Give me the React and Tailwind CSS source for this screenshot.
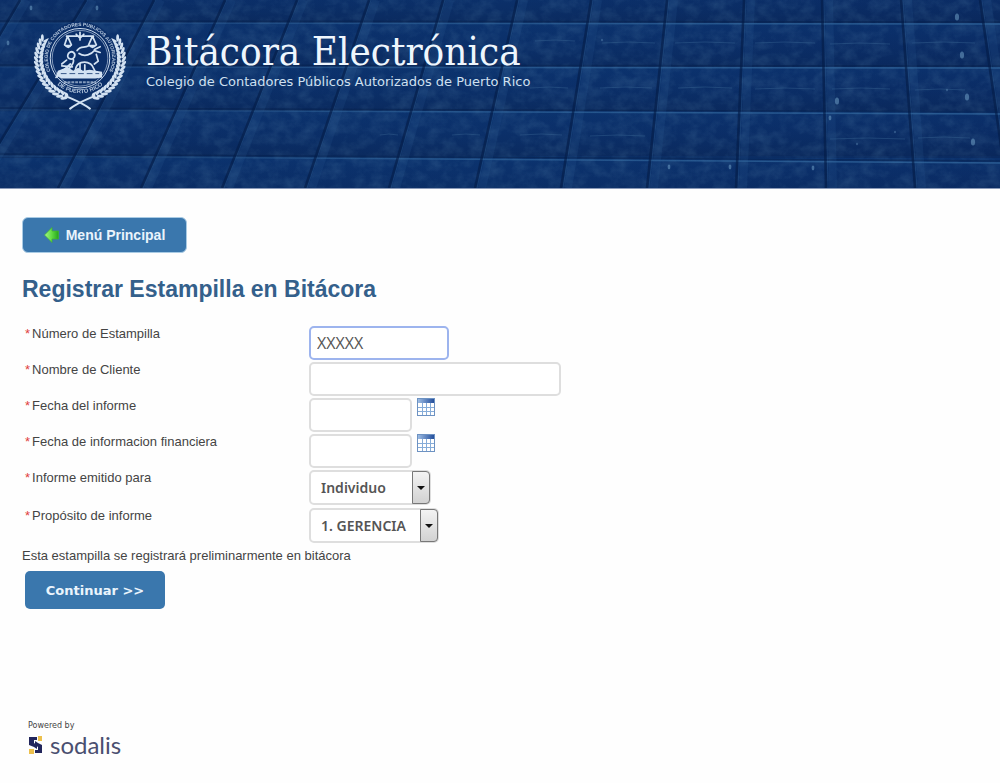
import { useState } from "react";

// [x at top, x at bottom] of each joint between tiles
const JOINTS = [
  [20, -90], [86, -28], [154, 58], [225, 141], [297, 222], [369, 305],
  [443, 389], [517, 475], [591, 561], [667, 647], [744, 736], [822, 826],
  [901, 915], [980, 1007],
];

// y of each row on the left and right side
const ROWS = [[22, 23], [66, 67], [109, 113], [155, 162]];

const GLINTS = [
  [957, 17, 3], [962, 55, 3], [967, 97, 3], [973, 142, 3], [837, 101, 3],
  [813, 168, 2], [730, 167, 2], [669, 167, 2], [830, 118, 2], [857, 144, 1],
  [8, 43, 2], [31, 8, 2], [97, 8, 2], [895, 132, 1], [947, 90, 1], [602, 40, 1],
];

const STREAKS = [
  [535, 41, 575], [602, 43, 655], [675, 43, 735], [755, 43, 815], [830, 44, 890], [912, 43, 975],
  [530, 88, 568], [600, 88, 652], [678, 88, 732], [755, 89, 815], [832, 89, 890], [915, 90, 965],
  [520, 135, 562], [590, 136, 645], [830, 139, 905], [918, 138, 970], [452, 135, 480], [380, 135, 398],
];

function TileBackdrop() {
  return (
    <svg
      className="absolute inset-0 w-full h-full"
      viewBox="0 0 1000 188"
      preserveAspectRatio="none"
      aria-hidden="true"
    >
      <defs>
        <linearGradient id="base" x1="0" y1="0" x2="1" y2="0">
          <stop offset="0" stopColor="#0a2c62" />
          <stop offset="0.5" stopColor="#0b2f66" />
          <stop offset="1" stopColor="#0a2a60" />
        </linearGradient>
        <linearGradient id="tile" x1="0" y1="0" x2="0" y2="1">
          <stop offset="0" stopColor="#0c3878" stopOpacity="0.5" />
          <stop offset="0.45" stopColor="#0c3272" stopOpacity="0.3" />
          <stop offset="1" stopColor="#0a2454" stopOpacity="0.4" />
        </linearGradient>
        <linearGradient id="edge" gradientUnits="userSpaceOnUse" x1="0" y1="0" x2="1000" y2="0">
          <stop offset="0" stopColor="#3a73a8" stopOpacity="0.15" />
          <stop offset="0.45" stopColor="#3a73a8" stopOpacity="0.5" />
          <stop offset="1" stopColor="#3a73a8" stopOpacity="0.6" />
        </linearGradient>
        <filter id="grain" x="0" y="0" width="100%" height="100%">
          <feTurbulence type="fractalNoise" baseFrequency="0.07 0.09" numOctaves="4" seed="8" />
          <feColorMatrix values="0 0 0 0 0.22  0 0 0 0 0.45  0 0 0 0 0.62  0 1.6 0 0 -0.6" />
        </filter>
      </defs>
      <rect width="1000" height="188" fill="url(#base)" />
      {[-21, 23, 67, 111, 158].map((y) => (
        <rect key={y} y={y} width="1000" height="45" fill="url(#tile)" />
      ))}
      <rect width="1000" height="188" filter="url(#grain)" opacity="0.18" />
      {STREAKS.map(([x, y, end]) => (
        <path
          key={`${x}-${y}`}
          d={`M${x} ${y}Q${(x + end) / 2} ${y - 2} ${end} ${y}`}
          fill="none"
          stroke="#3c6896"
          strokeOpacity="0.4"
        />
      ))}
      {ROWS.map(([l, r]) => (
        <g key={l}>
          <path d={`M0 ${l - 1}L1000 ${r - 1}`} stroke="#06204c" strokeWidth="1.5" strokeOpacity="0.5" />
          <path d={`M0 ${l + 1}L1000 ${r + 1}`} stroke="url(#edge)" strokeWidth="1.5" />
        </g>
      ))}
      {JOINTS.map(([a, b]) => (
        <g key={a}>
          <path d={`M${a + 7} 0L${b + 7} 188`} stroke="#2f639b" strokeWidth="8" strokeOpacity="0.16" />
          <path d={`M${a + 2} 0L${b + 2} 188`} stroke="#336494" strokeWidth="1" strokeOpacity="0.3" />
          <path d={`M${a} 0L${b} 188`} stroke="#051d48" strokeWidth="2.5" strokeOpacity="0.65" />
        </g>
      ))}
      {GLINTS.map(([x, y, r]) => (
        <ellipse key={`${x}-${y}`} cx={x} cy={y} rx={r * 0.7} ry={r * 1.2} fill="#6f9fc4" opacity="0.55" />
      ))}
    </svg>
  );
}

function Laurel() {
  const leaves = [];
  for (let i = 0; i < 17; i++) {
    const deg = 112 + i * 6.2;
    const a = (deg * Math.PI) / 180;
    const x = 50 + 43 * Math.cos(a);
    const y = 45 + 41 * Math.sin(a);
    leaves.push(
      <g key={i} transform={`translate(${x} ${y}) rotate(${deg + 90})`}>
        <ellipse cx="1" cy="-2.4" rx="3.8" ry="1.5" transform="rotate(-32)" />
        <ellipse cx="1" cy="2.4" rx="3.8" ry="1.5" transform="rotate(32)" />
      </g>
    );
  }
  return (
    <g>
      {leaves}
      <path d="M34 83C43 87 52 90 61 97" fill="none" stroke="currentColor" strokeWidth="2" />
    </g>
  );
}

function Seal() {
  return (
    <svg className="w-24 h-24 shrink-0 text-[#d3e2f2]" viewBox="0 0 100 100" fill="currentColor" role="img" aria-label="Sello del Colegio">
      <defs>
        <path id="ringTop" d="M23.6 64.6A33.5 33.5 0 1 1 76.4 64.6" />
        <path id="ringBottom" d="M23 68.5A36.5 36.5 0 0 0 77 68.5" />
      </defs>
      <Laurel />
      <g transform="translate(100 0) scale(-1 1)">
        <Laurel />
      </g>
      <circle cx="50" cy="44" r="38.5" fill="#0b2f69" />
      <text fontSize="5" fontFamily="Liberation Sans, sans-serif" fontWeight="bold" opacity="0.85">
        <textPath href="#ringTop" startOffset="50%" textAnchor="middle">COLEGIO DE CONTADORES PUBLICOS AUTORIZADOS</textPath>
      </text>
      <text fontSize="6" fontFamily="Liberation Sans, sans-serif" fontWeight="bold" opacity="0.85">
        <textPath href="#ringBottom" startOffset="50%" textAnchor="middle">DE PUERTO RICO</textPath>
      </text>
      <circle cx="50" cy="44" r="31" fill="none" stroke="currentColor" strokeWidth="1" />
      <circle cx="50" cy="44" r="29" fill="none" stroke="currentColor" strokeWidth="0.6" />
      <g fill="none" stroke="currentColor" strokeWidth="1.8" strokeLinecap="round" strokeLinejoin="round">
        <path d="M36 21H64M50 17V25M46 19L50 23L54 19M37 21L34 30M37 21L41 30M63 21L59 30M63 21L67 30" />
        <path d="M47 36C51 30 54 34 59 31M49 39C55 43 62 40 65 36L71 38M65 35L71 32M67 40L69 47L65 50" />
        <path d="M38 39C42 35 46 39 44 43C41 47 35 44 38 39M43 45C45 50 38 54 37 58M36 46L31 50" />
        <path d="M45 57C46 48 55 46 61 50C65 53 64 57 67 59M50 49V57M55 51V58" />
        <path d="M25 64L40 50M31 52L42 53" />
      </g>
      <path d="M33 30H42Q38 37 33 30ZM58 30H68Q63 37 58 30Z" />
      <path d="M27 57L37 53L43 57L48 54L53 57L60 56L73 58V64L66 65H31L25 62Z" />
      <path d="M30 60H70" stroke="#0b2f69" strokeWidth="0.8" strokeDasharray="6 3" />
      <path d="M33 69H67" stroke="currentColor" strokeWidth="2" strokeDasharray="3 1" opacity="0.6" />
    </svg>
  );
}

function ArrowIcon() {
  return (
    <svg className="w-4 h-4" viewBox="0 0 16 16" aria-hidden="true">
      <defs>
        <linearGradient id="arrow" x1="0" x2="1">
          <stop offset="0" stopColor="#a5f78a" />
          <stop offset="0.5" stopColor="#62dd43" />
          <stop offset="1" stopColor="#25a51b" />
        </linearGradient>
      </defs>
      <path d="M0.5 8L8 0.5V4H14.5V12H8V15.5Z" fill="url(#arrow)" stroke="#43b52c" strokeWidth="0.7" />
    </svg>
  );
}

function CalendarIcon() {
  return (
    <svg className="w-[18px] h-[18px]" viewBox="0 0 18 18" aria-hidden="true">
      <defs>
        <linearGradient id="calHead" x1="0" x2="1">
          <stop offset="0" stopColor="#9dbce3" />
          <stop offset="1" stopColor="#244f9c" />
        </linearGradient>
      </defs>
      <rect x="0.5" y="0.5" width="17" height="17" fill="#fff" stroke="#6d92c2" />
      <rect x="1" y="1" width="16" height="4" fill="url(#calHead)" />
      <path d="M1 9.5H17M1 13.5H17M5.5 5V17M9.5 5V17M13.5 5V17" stroke="#86acd8" />
    </svg>
  );
}

function SodalisLogo() {
  return (
    <div className="flex items-center gap-1.5">
      <svg className="w-4 h-5" viewBox="0 0 16 20" aria-hidden="true">
        <path d="M1 2H9V5H6V8L9 10V14L6 12L1 10Z" fill="#22265c" />
        <path d="M7 6L10 8L14 10V18H7V15H10V12L7 10Z" fill="#22265c" />
        <path d="M10 1H14V6H10ZM1 14H6V19H1Z" fill="#ecc04d" />
      </svg>
      <span className="font-[Lato,sans-serif] text-2xl leading-7 text-[#4a4f70]">sodalis</span>
    </div>
  );
}

function Field({ id, label, tall, children }) {
  return (
    <div className={`flex items-start ${tall ? "h-[38px]" : "h-9"}`}>
      <label htmlFor={id} className="w-[284px] shrink-0 text-[13px] leading-4 text-[#444]">
        <span className="text-[#e04040] mr-0.5">*</span>
        {label}
      </label>
      {children}
    </div>
  );
}

const inputClass =
  "h-[34px] rounded-[5px] border-2 bg-white px-1.5 font-['Open_Sans',sans-serif] text-base text-[#555] outline-none focus:border-[#9db4ee]";

function DateInput({ id }) {
  return (
    <div className="flex items-start gap-[5px]">
      <input id={id} type="text" className={`${inputClass} w-[103px] border-[#dedede]`} />
      <button type="button" aria-label="Abrir calendario">
        <CalendarIcon />
      </button>
    </div>
  );
}

function Select({ id, options, width }) {
  return (
    <div className={`relative ${width}`}>
      <select
        id={id}
        className="h-[35px] w-full appearance-none rounded-[5px] border-2 border-[#dedede] bg-white pl-2.5 font-['Noto_Sans',sans-serif] text-sm font-semibold text-[#555] outline-none"
      >
        {options.map((o) => (
          <option key={o}>{o}</option>
        ))}
      </select>
      <span className="pointer-events-none absolute right-px top-px flex h-[33px] w-[18px] items-center justify-center rounded-r-sm border border-[#777] bg-linear-to-b from-[#f3f3f3] to-[#d2d2d2]">
        <svg className="w-2 h-1" viewBox="0 0 8 4" aria-hidden="true">
          <path d="M0 0H8L4 4Z" fill="#111" />
        </svg>
      </span>
    </div>
  );
}

export default function App() {
  const [stamp, setStamp] = useState("XXXXX");

  return (
    <div className="min-h-screen bg-[#fefefe] font-['Liberation_Sans',Arial,sans-serif]">
      <header className="relative h-[189px] overflow-hidden border-b border-[#8b9ab8]">
        <TileBackdrop />
        <div className="relative flex items-start gap-[18px] pl-8 pt-4">
          <Seal />
          <div className="pt-3 text-[#eef6fd]">
            <h1 className="font-['DejaVu_Serif_Condensed','DejaVu_Serif',serif] text-[40px] leading-[46px]">Bitácora Electrónica</h1>
            <p className="font-['DejaVu_Sans',sans-serif] text-[13px] leading-4 text-[#cfe0f0]">
              Colegio de Contadores Públicos Autorizados de Puerto Rico
            </p>
          </div>
        </div>
      </header>

      <main className="px-[22px] pt-7">
        <button
          type="button"
          className="flex h-9 w-[165px] items-center justify-center gap-1.5 rounded-md border border-[#a9cbe4] bg-[#3a77ad] text-sm font-bold text-[#eaf4fc]"
        >
          <ArrowIcon />
          Menú Principal
        </button>

        <h2 className="mt-5 text-[23px] leading-8 font-bold text-[#34608b]">Registrar Estampilla en Bitácora</h2>

        <form className="pt-[21px]" onSubmit={(e) => e.preventDefault()}>
          <div className="pl-[3px]">
            <Field id="numero" label="Número de Estampilla">
              <input
                id="numero"
                type="text"
                value={stamp}
                onChange={(e) => setStamp(e.target.value)}
                className={`${inputClass} w-[140px] border-[#9db4ee]`}
              />
            </Field>
            <Field id="cliente" label="Nombre de Cliente">
              <input id="cliente" type="text" className={`${inputClass} w-[252px] border-[#dedede]`} />
            </Field>
            <Field id="fechaInforme" label="Fecha del informe">
              <DateInput id="fechaInforme" />
            </Field>
            <Field id="fechaFinanciera" label="Fecha de informacion financiera">
              <DateInput id="fechaFinanciera" />
            </Field>
            <Field id="emitido" label="Informe emitido para" tall>
              <Select id="emitido" width="w-[122px]" options={["Individuo", "Corporación"]} />
            </Field>
            <Field id="proposito" label="Propósito de informe" tall>
              <Select id="proposito" width="w-[130px]" options={["1. GERENCIA", "2. BANCO"]} />
            </Field>
          </div>
          <p className="text-[13px] leading-5 text-[#444]">
            Esta estampilla se registrará preliminarmente en bitácora
          </p>
          <button
            type="submit"
            className="ml-[3px] mt-[5px] h-[38px] w-[140px] rounded-[5px] bg-[#3a77ad] pt-0.5 font-['DejaVu_Sans',sans-serif] text-[13px] font-bold text-[#eaf4fc]"
          >
            Continuar &gt;&gt;
          </button>
        </form>
      </main>

      <footer className="px-7 pt-28">
        <p className="font-['DejaVu_Sans',sans-serif] text-[8px] leading-[10px] text-[#444]">Powered by</p>
        <SodalisLogo />
      </footer>
    </div>
  );
}
